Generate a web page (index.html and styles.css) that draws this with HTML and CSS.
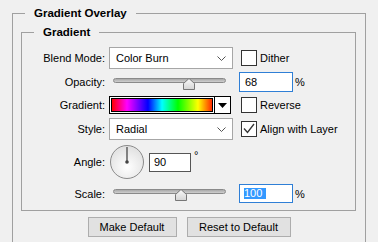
FILE: index.html
```html
<!DOCTYPE html>
<html>
<head>
<meta charset="utf-8">
<link rel="stylesheet" href="styles.css">
</head>
<body>
<div class="page">
  <fieldset class="group outer">
    <legend class="title">Gradient Overlay</legend>
    <fieldset class="group inner">
      <legend class="title">Gradient</legend>

      <div class="row r-blend">
        <span class="lbl">Blend Mode:</span>
        <div class="mid">
          <div class="select"><span>Color Burn</span>
            <svg class="chev" width="9" height="5" viewBox="0 0 9 5"><polyline points="0.5,0.5 4.5,4.5 8.5,0.5" fill="none" stroke="#555" stroke-width="1"/></svg>
          </div>
        </div>
        <span class="check"></span><span class="clabel">Dither</span>
      </div>

      <div class="row r-opacity">
        <span class="lbl">Opacity:</span>
        <div class="mid">
          <div class="slider">
            <div class="track"></div>
            <svg class="thumb" style="left:74px" width="12" height="12" viewBox="0 0 12 12"><defs><linearGradient id="tg1" x1="0" y1="0" x2="0" y2="1"><stop offset="0" stop-color="#fafafa"/><stop offset="1" stop-color="#d4d4d4"/></linearGradient></defs><polygon points="0.5,11.5 0.5,5.5 6,0.5 11.5,5.5 11.5,11.5" fill="url(#tg1)" stroke="#777"/></svg>
          </div>
        </div>
        <div class="num focus">68</div><span class="pct">%</span>
      </div>

      <div class="row r-grad">
        <span class="lbl">Gradient:</span>
        <div class="mid">
          <div class="gradbox">
            <div class="swatch"><div class="spectrum"></div></div>
            <div class="gradarrow"><svg width="9" height="5" viewBox="0 0 9 5"><polygon points="0,0 9,0 4.5,5" fill="#000"/></svg></div>
          </div>
        </div>
        <span class="check"></span><span class="clabel">Reverse</span>
      </div>

      <div class="row r-style">
        <span class="lbl">Style:</span>
        <div class="mid">
          <div class="select"><span>Radial</span>
            <svg class="chev" width="9" height="5" viewBox="0 0 9 5"><polyline points="0.5,0.5 4.5,4.5 8.5,0.5" fill="none" stroke="#555" stroke-width="1"/></svg>
          </div>
        </div>
        <span class="check"><svg width="14" height="14" viewBox="0 0 14 14"><polyline points="2,6.5 5.5,10.5 12,2" fill="none" stroke="#333" stroke-width="1.3"/></svg></span><span class="clabel">Align with Layer</span>
      </div>

      <div class="row r-angle">
        <span class="lbl">Angle:</span>
        <div class="mid">
          <svg class="dial" width="34" height="34" viewBox="0 0 34 34"><defs><radialGradient id="dg" cx="0.5" cy="0.65" r="0.6"><stop offset="0" stop-color="#ffffff"/><stop offset="1" stop-color="#e2e2e2"/></radialGradient></defs><circle cx="17" cy="17" r="16.5" fill="url(#dg)" stroke="#8a8a8a"/><line x1="17" y1="17" x2="17" y2="2" stroke="#555" stroke-width="1.4"/><circle cx="17" cy="17" r="1.8" fill="#444"/></svg>
          <div class="num angle">90</div><span class="deg">°</span>
        </div>
      </div>

      <div class="row r-scale">
        <span class="lbl">Scale:</span>
        <div class="mid">
          <div class="slider">
            <div class="track"></div>
            <svg class="thumb" style="left:66px" width="12" height="12" viewBox="0 0 12 12"><defs><linearGradient id="tg2" x1="0" y1="0" x2="0" y2="1"><stop offset="0" stop-color="#fafafa"/><stop offset="1" stop-color="#d4d4d4"/></linearGradient></defs><polygon points="0.5,11.5 0.5,5.5 6,0.5 11.5,5.5 11.5,11.5" fill="url(#tg2)" stroke="#777"/></svg>
          </div>
        </div>
        <div class="num focus"><span class="sel">100</span></div><span class="pct">%</span>
      </div>
    </fieldset>

    <div class="buttons">
      <button class="btn b-make">Make Default</button>
      <button class="btn b-reset">Reset to Default</button>
    </div>
  </fieldset>
</div>
</body>
</html>
```

FILE: styles.css
```css
html, body {
  margin: 0;
  padding: 0;
  overflow: hidden;
  background: #f0f0f0;
}
body {
  font-family: "Liberation Sans", Arial, sans-serif;
  font-size: 11px;
  color: #000;
}
.page {
  padding: 6px 12px 0 12px;
}
.group {
  margin: 0;
  padding: 0;
  border: 1px solid #a0a0a0;
  min-width: 0;
}
.title {
  font-weight: bold;
  font-size: 11.5px;
  line-height: 15px;
  margin-left: 12px;
  padding: 0 9px;
}
.outer {
  padding-bottom: 20px;
}
.inner {
  margin: 4px 9px 0 8px;
  padding-bottom: 7px;
}
.row {
  display: flex;
  align-items: center;
}
.r-blend { margin-top: 7px; height: 22px; }
.r-opacity { margin-top: 3px; height: 20px; }
.r-grad { margin-top: 4px; height: 18px; }
.r-style { margin-top: 4px; height: 22px; }
.r-angle { margin-top: 5px; height: 34px; }
.r-scale { margin-top: 5px; height: 19px; }

.lbl {
  flex: none;
  width: 83px;
  margin-right: 4px;
  text-align: right;
}
.mid {
  flex: none;
  width: 130px;
  display: flex;
  align-items: center;
}
.select {
  box-sizing: border-box;
  width: 124px;
  height: 22px;
  border: 1px solid #a6a6a6;
  background: #fff;
  display: flex;
  align-items: center;
  justify-content: space-between;
  padding: 0 6px 0 6px;
}
.chev {
  display: block;
}
.check {
  flex: none;
  box-sizing: border-box;
  width: 16px;
  height: 16px;
  border: 1px solid #333;
  background: #fff;
  margin-left: 2px;
  display: flex;
  align-items: center;
  justify-content: center;
}
.check svg { display: block; }
.clabel {
  margin-left: 3px;
}

.slider {
  position: relative;
  width: 124px;
  height: 12px;
  margin-top: 3px;
}
.track {
  box-sizing: border-box;
  margin-left: 4px;
  width: 113px;
  height: 5px;
  border: 1px solid #8a8a8a;
  border-radius: 3px;
  background: linear-gradient(#a9a9a9, #cfcfcf);
}
.thumb {
  position: absolute;
  top: 0;
  display: block;
}

.num {
  box-sizing: border-box;
  height: 19px;
  background: #fff;
  display: flex;
  align-items: center;
  padding: 0 4px;
}
.num.focus {
  width: 54px;
  border: 1px solid #2f7fd6;
}
.r-opacity .num { height: 20px; padding-left: 5px; }
.pct {
  margin-left: 2px;
}
.sel {
  background: #3399ff;
  color: #fff;
  line-height: 11px;
  padding-right: 4px;
}

.gradbox {
  box-sizing: border-box;
  width: 122px;
  height: 18px;
  border: 1px solid #000;
  display: flex;
  background: #fff;
}
.swatch {
  flex: 1;
  padding: 1px;
  background: #fff;
  border-right: 1px solid #000;
  display: flex;
}
.spectrum {
  flex: 1;
  border: 1px solid #000;
  background: linear-gradient(to right, #ff0000 0%, #ff00ff 15%, #0000ff 36%, #00ffff 50%, #00ff00 66%, #ffff00 86%, #ff2a00 100%);
}
.gradarrow {
  width: 15px;
  display: flex;
  align-items: center;
  justify-content: center;
  background: #fff;
}
.gradarrow svg { display: block; }

.dial {
  display: block;
  margin-left: 1px;
}
.num.angle {
  width: 42px;
  margin-left: 5px;
  border: 1px solid #555;
}
.deg {
  align-self: flex-start;
  margin-left: 3px;
  margin-top: 5px;
  line-height: 11px;
}

.buttons {
  display: flex;
  justify-content: center;
  gap: 10px;
  margin-top: 6px;
}
.btn {
  box-sizing: border-box;
  height: 20px;
  margin: 0;
  padding: 0;
  border: 1px solid #adadad;
  background: #e1e1e1;
  font-family: "Liberation Sans", Arial, sans-serif;
  font-size: 11px;
  color: #000;
}
.b-make { width: 89px; }
.b-reset { width: 104px; }
```
